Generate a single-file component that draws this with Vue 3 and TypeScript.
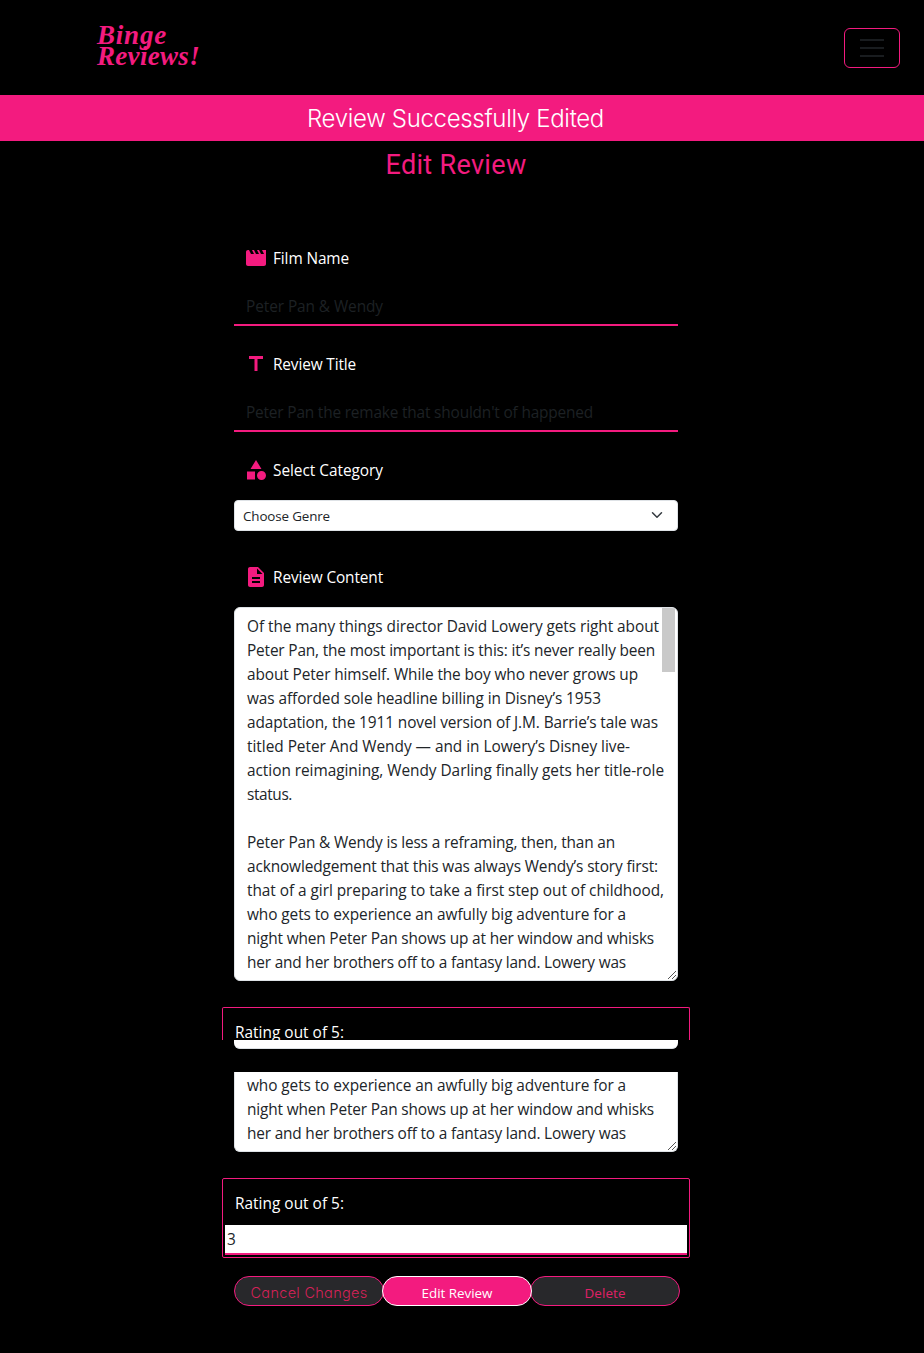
<script setup lang="ts">
interface Line { text: string; width: number }

// Adjusts tracking so that a line of text occupies the given width.
const vFit = {
  mounted(el: HTMLElement, binding: { value: number }) {
    const count = (el.textContent ?? '').length
    const natural = el.getBoundingClientRect().width
    if (count > 0) el.style.letterSpacing = `${(binding.value - natural) / count}px`
  },
}

const fields = [
  { icon: 'movie', label: 'Film Name', width: 76, value: 'Peter Pan & Wendy', valueWidth: 137 },
  { icon: 'title', label: 'Review Title', width: 83, value: "Peter Pan the remake that shouldn't of happened", valueWidth: 347 },
]

const icons: Record<string, string> = {
  movie: 'M18 4l2 4h-3l-2-4h-2l2 4h-3l-2-4H8l2 4H7L5 4H4c-1.1 0-2 .9-2 2v12c0 1.1.9 2 2 2h16c1.1 0 2-.9 2-2V4h-4z',
  title: 'M5 4v3h5.5v12h3V7H19V4z',
  category: 'M12 2l-5.5 9h11zM17.5 13a4.5 4.5 0 1 0 0 9a4.5 4.5 0 1 0 0-9zM3 13.5h8v8H3z',
  description: 'M14 2H6c-1.1 0-2 .9-2 2v16c0 1.1.9 2 2 2h12c1.1 0 2-.9 2-2V8l-6-6zm2 16H8v-2h8v2zm0-4H8v-2h8v2zm-3-5V3.5L18.5 9H13z',
}

const review: Line[] = [
  { text: 'Of the many things director David Lowery gets right about', width: 412 },
  { text: 'Peter Pan, the most important is this: it’s never really been', width: 408 },
  { text: 'about Peter himself. While the boy who never grows up', width: 391 },
  { text: 'was afforded sole headline billing in Disney’s 1953', width: 354 },
  { text: 'adaptation, the 1911 novel version of J.M. Barrie’s tale was', width: 411 },
  { text: 'titled Peter And Wendy — and in Lowery’s Disney live-', width: 383 },
  { text: 'action reimagining, Wendy Darling finally gets her title-role', width: 417 },
  { text: 'status.', width: 45 },
  { text: '', width: 0 },
  { text: 'Peter Pan & Wendy is less a reframing, then, than an', width: 368 },
  { text: 'acknowledgement that this was always Wendy’s story first:', width: 411 },
  { text: 'that of a girl preparing to take a first step out of childhood,', width: 417 },
  { text: 'who gets to experience an awfully big adventure for a', width: 379 },
  { text: 'night when Peter Pan shows up at her window and whisks', width: 407 },
  { text: 'her and her brothers off to a fantasy land. Lowery was', width: 379 },
]
const tail = review.slice(-3)
</script>

<template>
  <div class="page">
    <header class="header">
      <div class="logo">
        <div><span v-fit="70">Binge</span></div>
        <div><span v-fit="103">Reviews!</span></div>
      </div>
      <button class="toggler" aria-label="Toggle navigation"><i></i><i></i><i></i></button>
    </header>
    <div class="banner"><span v-fit="297">Review Successfully Edited</span></div>
    <h1><span v-fit="141">Edit Review</span></h1>

    <main class="form">
      <section v-for="f in fields" :key="f.label" class="field">
        <div class="label">
          <svg viewBox="0 0 24 24"><path :d="icons[f.icon]" /></svg>
          <span v-fit="f.width">{{ f.label }}</span>
        </div>
        <div class="input"><span v-fit="f.valueWidth">{{ f.value }}</span></div>
      </section>

      <section class="field category">
        <div class="label">
          <svg viewBox="0 0 24 24"><path :d="icons.category" /></svg>
          <span v-fit="110">Select Category</span>
        </div>
        <div class="select">
          <span v-fit="87">Choose Genre</span>
          <svg viewBox="0 0 16 16"><path d="M2 5l6 6 6-6" /></svg>
        </div>
      </section>

      <section class="content">
        <div class="label">
          <svg viewBox="0 0 24 24"><path :d="icons.description" /></svg>
          <span v-fit="110">Review Content</span>
        </div>
        <div class="textarea">
          <p v-for="(l, i) in review" :key="i"><span v-fit="l.width">{{ l.text }}</span></p>
          <div class="thumb"></div>
          <svg class="grip" viewBox="0 0 10 10"><path d="M1 9L9 1M5 9L9 5" /></svg>
        </div>
      </section>

      <div class="rating cut"><span v-fit="109">Rating out of 5:</span></div>
      <div class="strip"></div>

      <div class="textarea tail">
        <p v-for="(l, i) in tail" :key="i"><span v-fit="l.width">{{ l.text }}</span></p>
        <svg class="grip" viewBox="0 0 10 10"><path d="M1 9L9 1M5 9L9 5" /></svg>
      </div>

      <div class="rating">
        <span v-fit="109">Rating out of 5:</span>
        <div class="score">3</div>
      </div>

      <div class="actions">
        <button class="geo"><span v-fit="117">Cancel Changes</span></button>
        <button class="primary"><span v-fit="71">Edit Review</span></button>
        <button><span v-fit="41">Delete</span></button>
      </div>
    </main>
  </div>
</template>

<style>
body { background: #000; }
</style>

<style scoped>
* { box-sizing: border-box; }
.page {
  --pink: #f31b7f;
  height: 1353px;
  overflow: hidden;
  background: #000;
  color: #fff;
  font: 15.4px/24px "Open Sans", "Noto Sans", sans-serif;
}
span { white-space: pre; display: inline-block; }
.header {
  height: 95px;
  padding: 0 24px 0 97px;
  display: flex;
  align-items: center;
  justify-content: space-between;
}
.logo {
  color: var(--pink);
  font: italic bold 27px/21px "Liberation Serif", serif;
  padding-bottom: 3px;
}
.toggler {
  width: 56px;
  height: 40px;
  margin-top: 1px;
  padding: 0;
  border: 1px solid var(--pink);
  border-radius: 6px;
  background: none;
  display: flex;
  flex-direction: column;
  align-items: center;
  justify-content: center;
  gap: 6px;
}
.toggler i { width: 24px; height: 2px; background: #191c1f; }
.banner {
  height: 46px;
  background: var(--pink);
  text-align: center;
  padding-right: 13px;
  font: 300 24px/48px Inter, sans-serif;
  font-feature-settings: "cv11";
}
h1 {
  margin: 0;
  height: 94px;
  padding-right: 12px;
  color: var(--pink);
  text-align: center;
  font: 400 27px/48px Roboto, sans-serif;
}
.form { width: 444px; margin-left: 234px; }
.field { height: 106px; }
.label {
  height: 46px;
  padding-left: 10px;
  display: flex;
  align-items: center;
  gap: 5px;
}
.label span { padding-top: 2px; }
.label svg { width: 24px; height: 24px; fill: var(--pink); }
.input {
  height: 38px;
  margin-top: 7px;
  padding: 7px 12px 5px;
  border-bottom: 2px solid var(--pink);
  color: #1d2124;
}
.category { height: 107px; }
.select {
  height: 31px;
  margin-top: 7px;
  padding: 0 14px 0 8px;
  border: 1px solid #dee2e6;
  border-radius: 4px;
  background: #fff;
  color: #212529;
  font-size: 13.4px;
  display: flex;
  align-items: center;
  justify-content: space-between;
}
.select svg { width: 12px; height: 12px; margin-bottom: 1px; fill: none; stroke: #343a40; stroke-width: 2; stroke-linecap: round; stroke-linejoin: round; }
.textarea {
  position: relative;
  height: 374px;
  margin-top: 7px;
  padding: 7px 12px;
  border: 1px solid #dee2e6;
  border-radius: 6px;
  background: #fff;
  color: #212529;
  overflow: hidden;
}
.textarea p { margin: 0; height: 24px; }
.thumb { position: absolute; top: 0; right: 2px; width: 13px; height: 64px; background: #c9c9c9; }
.grip { position: absolute; right: 0; bottom: 0; width: 10px; height: 10px; stroke: #555; stroke-width: 1; fill: none; }
.rating {
  width: 468px;
  height: 80px;
  margin: 26px 0 0 -12px;
  padding: 13px 2px 2px;
  border: 1px solid var(--pink);
  border-radius: 2px;
}
.rating > span { margin-left: 10px; }
.rating.cut { height: 33px; border-bottom: 0; border-radius: 2px 2px 0 0; overflow: hidden; }
.strip { height: 9px; background: #fff; border-bottom: 1px solid #dee2e6; border-radius: 0 0 6px 6px; }
.textarea.tail { height: 80px; margin-top: 23px; padding-top: 2px; border-top: 0; border-radius: 0 0 6px 6px; }
.score {
  height: 30px;
  margin-top: 9px;
  padding-left: 2px;
  background: #fff;
  color: #212529;
  line-height: 30px;
  border-bottom: 2px solid var(--pink);
}
.actions { width: 446px; margin-top: 18px; display: flex; }
.actions button {
  width: 150px;
  height: 30px;
  flex: none;
  padding: 3px 0 0;
  border: 1px solid var(--pink);
  border-radius: 15px;
  background: #28282b;
  color: #e02067;
  font: 13.4px/24px "Open Sans", "Noto Sans", sans-serif;
}
.actions button + button { margin-left: -2px; }
.actions .primary { position: relative; background: var(--pink); border-color: #fff; color: #fff; }
.actions .geo { font: 300 14.5px/24px Inter, sans-serif; font-feature-settings: "cv11"; color: #d52158; }
</style>
